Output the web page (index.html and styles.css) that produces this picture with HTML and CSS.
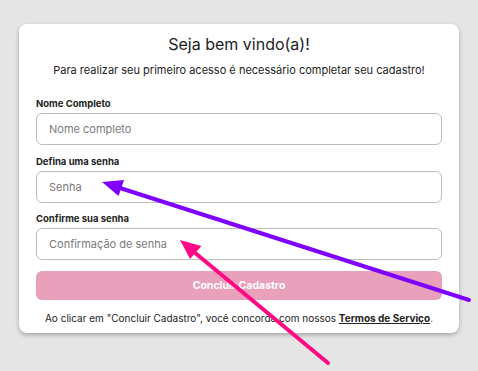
FILE: index.html
```html
<!DOCTYPE html>
<html lang="pt-BR">
<head>
    <meta charset="UTF-8">
    <meta name="viewport" content="width=device-width, initial-scale=1.0">
    <title>Cadastro</title>
    <link rel="stylesheet" href="styles.css">
</head>
<body>
    <main class="page">
        <form class="card">
            <h1 class="title">Seja bem vindo(a)!</h1>
            <p class="subtitle">Para realizar seu primeiro acesso é necessário completar seu cadastro!</p>

            <div class="fields">
                <div class="field">
                    <label for="nome">Nome Completo</label>
                    <input id="nome" type="text" placeholder="Nome completo">
                </div>
                <div class="field">
                    <label for="senha">Defina uma senha</label>
                    <input id="senha" type="password" placeholder="Senha">
                </div>
                <div class="field">
                    <label for="confirma">Confirme sua senha</label>
                    <input id="confirma" type="password" placeholder="Confirmação de senha">
                </div>
            </div>

            <button class="submit" type="button" disabled>Concluir Cadastro</button>

            <p class="terms">Ao clicar em "Concluir Cadastro", você concorda com nossos <a href="#">Termos de Serviço</a>.</p>
        </form>
    </main>

    <!-- setas de anotação por cima da tela -->
    <svg class="arrows" width="478" height="371" viewBox="0 0 478 371">
        <line x1="469" y1="300" x2="120" y2="188" stroke="#7f00ff" stroke-width="4" stroke-linecap="round"/>
        <polygon points="102,182 124,180 118.5,196" fill="#7f00ff"/>
        <line x1="328" y1="363" x2="194" y2="252" stroke="#ff0a84" stroke-width="4" stroke-linecap="round"/>
        <polygon points="180,240 201.5,246 190,259" fill="#ff0a84"/>
    </svg>
</body>
</html>
```

FILE: styles.css
```css
* {
    margin: 0;
    padding: 0;
    box-sizing: border-box;
    font-family: 'Inter', 'Liberation Sans', sans-serif;
}

body {
    background: #e5e5e5;
    color: #222;
    width: 478px;
    height: 371px;
    overflow: hidden;
    position: relative;
}

.page {
    padding: 24px 19px 0;
}

.card {
    background: #fff;
    border-radius: 8px;
    box-shadow: 0 2px 4px rgba(0, 0, 0, 0.28);
    padding: 8px 17px 7px;
    display: flex;
    flex-direction: column;
}

.title {
    font-size: 16px;
    font-weight: 400;
    line-height: 24px;
    text-align: center;
    color: #222;
}

.subtitle {
    margin-top: 5px;
    font-size: 11px;
    line-height: 18px;
    text-align: center;
    color: #222;
}

.fields {
    margin-top: 17px;
    display: flex;
    flex-direction: column;
    gap: 8.5px;
}

.field {
    display: flex;
    flex-direction: column;
}

.field label {
    font-size: 9.5px;
    font-weight: 700;
    line-height: 15px;
    margin-bottom: 2px;
    color: #222;
}

.field input {
    height: 32px;
    border: 1px solid #bdbdbd;
    border-radius: 6px;
    padding: 0 12px;
    font-size: 11px;
    color: #222;
    background: #fff;
    outline: none;
}

.field input::placeholder {
    color: #7a7a7a;
}

.submit {
    margin-top: 11px;
    height: 29px;
    border: none;
    border-radius: 6px;
    background: #e8a0bb;
    color: #fff;
    font-size: 10.5px;
    font-weight: 700;
    opacity: 1;
}

.terms {
    margin-top: 10px;
    font-size: 10px;
    line-height: 16px;
    text-align: center;
    white-space: nowrap;
    color: #222;
}

.terms a {
    color: #222;
    font-weight: 700;
    text-decoration: underline;
}

.arrows {
    position: absolute;
    top: 0;
    left: 0;
    pointer-events: none;
}
```
